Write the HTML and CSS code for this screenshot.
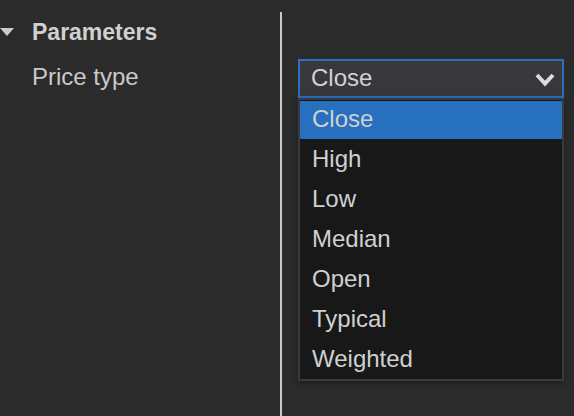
FILE: index.html
```html
<!DOCTYPE html>
<html>
<head>
<meta charset="utf-8">
<link rel="stylesheet" href="styles.css">
</head>
<body>
<div class="page">
  <div class="labels">
    <div class="section">
      <span class="tri"></span>
      <span class="section-title">Parameters</span>
    </div>
    <div class="label">Price type</div>
  </div>
  <div class="fields">
    <div class="select-wrap">
      <div class="select">
        <span class="select-value">Close</span>
        <svg class="chev" width="20" height="15" viewBox="0 0 20 15"><path d="M2 3 L10 11.5 L18 3" fill="none" stroke="#dcdcdc" stroke-width="4" stroke-linecap="butt" stroke-linejoin="miter"/></svg>
      </div>
      <ul class="menu">
        <li class="item active">Close</li>
        <li class="item">High</li>
        <li class="item">Low</li>
        <li class="item">Median</li>
        <li class="item">Open</li>
        <li class="item">Typical</li>
        <li class="item">Weighted</li>
      </ul>
    </div>
  </div>
</div>
</body>
</html>
```
FILE: styles.css
```css
html, body {
  margin: 0;
  padding: 0;
  background: #2b2b2b;
  height: 100%;
  overflow: hidden;
}
body {
  font-family: "Liberation Sans", Arial, sans-serif;
  color: #cfcfcf;
}
.page {
  display: flex;
  height: 416px;
}
.labels {
  width: 280px;
  flex: none;
}
.section {
  display: flex;
  align-items: center;
  height: 30px;
  margin-top: 17px;
}
.tri {
  width: 0;
  height: 0;
  border-left: 7px solid transparent;
  border-right: 7px solid transparent;
  border-top: 8px solid #cccccc;
  margin-right: 18px;
}
.section-title {
  font-weight: bold;
  font-size: 23px;
  color: #d0d0d0;
}
.label {
  font-size: 24px;
  height: 30px;
  line-height: 30px;
  margin-top: 15px;
  padding-left: 32px;
  color: #c9c9c9;
}
.fields {
  flex: 1;
  margin-top: 12px;
  border-left: 2px solid #c8c8c8;
  padding-left: 16px;
  padding-top: 47px;
}
.select-wrap {
  position: relative;
  width: 266px;
}
.select {
  box-sizing: border-box;
  height: 39px;
  border: 2px solid #2a70bd;
  background: #38383c;
  display: flex;
  align-items: center;
  justify-content: space-between;
  padding: 0 7px 0 11px;
  font-size: 24px;
  color: #d2d2d2;
}
.select-value {
  line-height: 31px;
  margin-bottom: 2px;
}
.chev {
  display: block;
  margin-top: 1px;
}
.menu {
  position: absolute;
  left: 0;
  top: 39px;
  width: 266px;
  box-sizing: border-box;
  margin: 0;
  padding: 0;
  list-style: none;
  background: #181818;
  border: 2px solid #3a3a3c;
  box-shadow: 0 2px 6px rgba(0, 0, 0, 0.35);
}
.item {
  height: 40px;
  line-height: 40px;
  padding-left: 12px;
  font-size: 24px;
  color: #d0d0d0;
}
.item.active {
  background: #2670bf;
  height: 38px;
  line-height: 36px;
  margin: 1px 0 0;
}
```
